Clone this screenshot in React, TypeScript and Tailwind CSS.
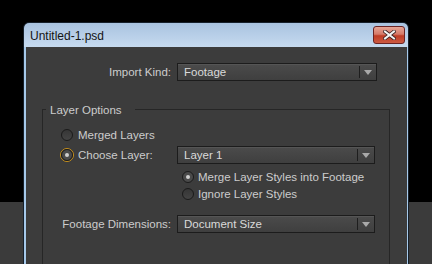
import { ReactNode } from "react";

const Radio = ({ checked, focused }: { checked?: boolean; focused?: boolean }) => (
  <svg width="14" height="14" viewBox="0 0 14 14" className="shrink-0">
    <defs>
      <linearGradient id="rb" x1="0" y1="0" x2="0" y2="1">
        <stop offset="0" stopColor="#353535" />
        <stop offset="1" stopColor="#454545" />
      </linearGradient>
    </defs>
    {focused && <circle cx="7" cy="7" r="6.5" fill="none" stroke="#c8901a" strokeWidth="1" />}
    <circle cx="7" cy="7" r="5.5" fill={checked ? "#4a4a4a" : "url(#rb)"} stroke="#1b1b1b" strokeWidth="1" />
    {checked && <circle cx="7" cy="7" r="2" fill="#cfcfcf" />}
  </svg>
);

const Select = ({ value, width }: { value: string; width: string }) => (
  <div
    className={`${width} h-[18px] flex items-center border border-[#1c1c1c] bg-gradient-to-b from-[#4b4b4b] to-[#3f3f3f] shadow-[inset_0_1px_0_#555]`}
  >
    <span className="flex-1 pl-[6px] pt-[1px] text-[#dadada] leading-none">{value}</span>
    <span className="w-px h-[12px] bg-[#1e1e1e]" />
    <span className="w-[16px] flex items-center justify-center">
      <svg width="8" height="5" viewBox="0 0 8 5">
        <path d="M0 0H8L4 5Z" fill="#a9a9a9" />
      </svg>
    </span>
  </div>
);

const Row = ({ children, className }: { children: ReactNode; className?: string }) => (
  <div className={`flex items-center ${className ?? ""}`}>{children}</div>
);

const App = () => {
  return (
    <div className="relative w-[432px] h-[264px] overflow-hidden bg-black font-['Liberation_Sans',Arial,sans-serif] text-[11.5px]">
      <div className="h-[202px] bg-black" />
      <div className="h-[62px] bg-[#3b3b3b]" />

      {/* Dialog window */}
      <div className="absolute left-[23px] top-[22px] w-[386px] border border-[#16202b] rounded-t-[6px] overflow-hidden">
        {/* Title bar */}
        <div className="h-[24px] flex items-center justify-between bg-gradient-to-b from-[#a9c3e0] to-[#c6daef]">
          <span className="pl-[6px] translate-y-[1px] text-[12px] text-[#141414]">Untitled-1.psd</span>
          <div className="mr-[3px] w-[32px] h-[18px] rounded-[3px] border border-[#6a2424] flex items-center justify-center bg-[linear-gradient(to_bottom,#e6a596_0%,#d67a69_45%,#bf3c25_55%,#cc5a42_100%)]">
            <svg width="13" height="10" viewBox="0 0 13 10">
              <path d="M2 1.5L11 8.5M11 1.5L2 8.5" stroke="#3a2020" strokeWidth="3.6" strokeLinecap="square" />
              <path d="M2 1.5L11 8.5M11 1.5L2 8.5" stroke="#f4f4f4" strokeWidth="2" strokeLinecap="square" />
            </svg>
          </div>
        </div>

        {/* Frame + body */}
        <div className="pl-[2px] pr-[1px] bg-[#a6c9ea]">
          <div className="bg-[#3c3c3c] text-[#cccccc] pt-[16px] pb-[40px]">
            <Row>
              <span className="w-[145px] translate-y-[1px] text-right">Import Kind:</span>
              <span className="ml-[6px]">
                <Select value="Footage" width="w-[200px]" />
              </span>
            </Row>

            <fieldset className="ml-[16px] mt-[21px] w-[348px] border border-[#262626] pt-[12px] pb-[40px]">
              <legend className="ml-[3px] pl-[4px] pr-[13px] leading-[14px] text-[#cccccc]">
                <span className="block translate-y-[1px]">Layer Options</span>
              </legend>

              <Row className="h-[14px] pl-[17px] gap-[4px]">
                <Radio />
                <span className="translate-y-[1px]">Merged Layers</span>
              </Row>

              <Row className="mt-[4px]">
                <div className="w-[134px] pl-[17px] flex items-center gap-[4px]">
                  <Radio checked focused />
                  <span className="translate-y-[1px]">Choose Layer:</span>
                </div>
                <Select value="Layer 1" width="w-[198px]" />
              </Row>

              <div className="mt-[4px] pl-[138px]">
                <Row className="h-[17px] gap-[3px]">
                  <Radio checked />
                  <span className="translate-y-[1px]">Merge Layer Styles into Footage</span>
                </Row>
                <Row className="h-[17px] gap-[3px]">
                  <Radio />
                  <span className="translate-y-[1px]">Ignore Layer Styles</span>
                </Row>
              </div>

              <Row className="mt-[13px]">
                <span className="w-[128px] translate-y-[1px] text-right">Footage Dimensions:</span>
                <span className="ml-[6px]">
                  <Select value="Document Size" width="w-[198px]" />
                </span>
              </Row>
            </fieldset>
          </div>
        </div>
      </div>
    </div>
  );
};

export default App;
